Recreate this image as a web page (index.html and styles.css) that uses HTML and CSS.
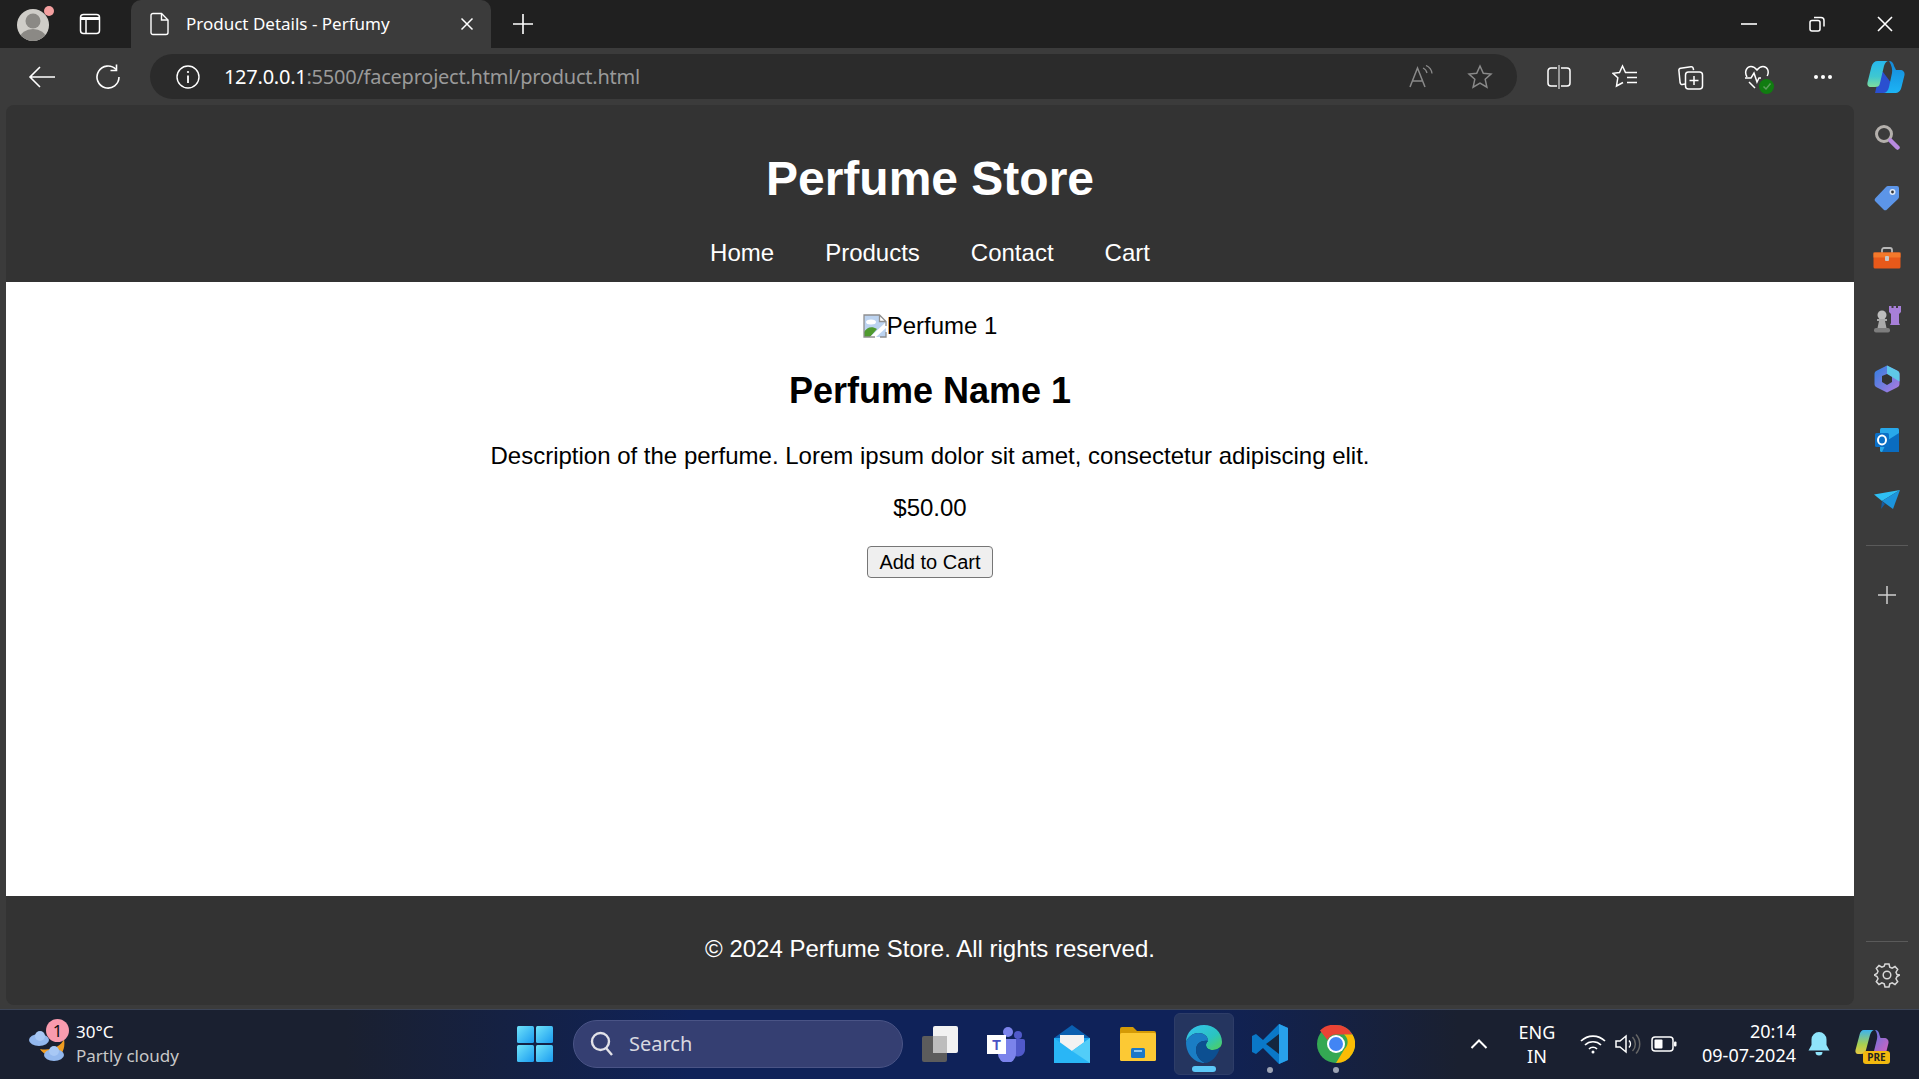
FILE: index.html
```html
<!DOCTYPE html>
<html lang="en">
<head>
  <meta charset="UTF-8">
  <title>Product Details - Perfumy</title>
  <link rel="stylesheet" href="styles.css">
</head>
<body>
  <div class="tabstrip">
    <div class="avatar">
      <svg width="36" height="36" viewBox="0 0 36 36"><defs><clipPath id="ac"><circle cx="16" cy="19" r="16"/></clipPath></defs><circle cx="16" cy="19" r="16" fill="#cfcdc8"/><g clip-path="url(#ac)"><circle cx="16" cy="15" r="7.5" fill="#8b8985"/><ellipse cx="16" cy="32" rx="13" ry="9" fill="#8b8985"/></g></svg>
      <span class="avatar-dot"></span>
    </div>
    <div class="strip-btn">
      <svg width="22" height="24" viewBox="0 0 22 24" fill="none" stroke="#fff" stroke-width="1.5"><rect x="1.500" y="2.500" width="19" height="19" rx="3"/><path d="M2 6.500h18" stroke-width="3"/><path d="M7 7v14"/></svg>
    </div>
    <div class="tab">
      <svg class="tab-icon" width="20" height="24" viewBox="0 0 20 24" fill="none" stroke="#fff" stroke-width="1.4"><path d="M3 1.500h8.500l6.500 6.500v12.500a2 2 0 0 1-2 2H3a2 2 0 0 1-2-2v-17a2 2 0 0 1 2-2z"/><path d="M11.500 1.500V8H18"/></svg>
      <span class="tab-title">Product Details - Perfumy</span>
      <svg class="tab-close" width="14" height="14" viewBox="0 0 14 14" stroke="#fff" stroke-width="1.5"><path d="M1.500 1.500l11 11M12.500 1.500l-11 11"/></svg>
    </div>
    <div class="new-tab">
      <svg width="22" height="22" viewBox="0 0 22 22" stroke="#fff" stroke-width="1.6"><path d="M11 1v20M1 11h20"/></svg>
    </div>
    <div class="window-btns">
      <div class="window-btn"><svg width="16" height="16" viewBox="0 0 16 16" stroke="#fff" stroke-width="1.6"><path d="M0 8h16"/></svg></div>
      <div class="window-btn"><svg width="16" height="16" viewBox="0 0 16 16" fill="none" stroke="#fff" stroke-width="1.5"><rect x="1" y="4.500" width="10" height="10.500" rx="2"/><path d="M5 1.500h7a3 3 0 0 1 3 3v6"/></svg></div>
      <div class="window-btn"><svg width="16" height="16" viewBox="0 0 16 16" stroke="#fff" stroke-width="1.6"><path d="M1 1l14 14M15 1L1 15"/></svg></div>
    </div>
  </div>

  <div class="toolbar">
    <div class="nav-btn">
      <svg width="28" height="24" viewBox="0 0 28 24" fill="none" stroke="#fff" stroke-width="1.600"><path d="M27 12H2M12 2L2 12l10 10"/></svg>
    </div>
    <div class="nav-btn">
      <svg width="26" height="26" viewBox="0 0 26 26" fill="none" stroke="#fff" stroke-width="1.600"><path d="M21 5.500A11 11 0 1 0 24 13"/><path d="M21.500 0.500v6h-6"/></svg>
    </div>
    <div class="address-bar">
      <svg class="info-icon" width="24" height="24" viewBox="0 0 24 24" fill="none" stroke="#fff" stroke-width="1.400"><circle cx="12" cy="12" r="11"/><path d="M12 10.500V18" stroke-width="1.800"/><circle cx="12" cy="7" r="1.100" fill="#fff" stroke="none"/></svg>
      <span class="url"><span class="url-host">127.0.0.1</span>:5500/faceproject.html/product.html</span>
      <svg class="read-icon" width="26" height="24" viewBox="0 0 26 24" fill="none" stroke="#8a8a8a" stroke-width="1.500"><path d="M2 22L9.500 3 17 22M5 16h9"/><path d="M15 3a7 7 0 0 1 4 5M18 0.500a10 10 0 0 1 6 8" stroke-width="1.300"/></svg>
      <svg class="star-icon" width="26" height="26" viewBox="0 0 26 26" fill="none" stroke="#8a8a8a" stroke-width="1.500"><path d="M13 2l3.300 7.300 7.700.8-5.800 5.200 1.700 7.900L13 19.200l-6.900 4 1.700-7.900L2 10.100l7.700-.8z"/></svg>
    </div>
    <div class="tool-icons">
      <div class="tool-icon"><svg width="24" height="26" viewBox="0 0 24 26" fill="none" stroke="#fff" stroke-width="1.500"><path d="M10 4H4a3 3 0 0 0-3 3v12a3 3 0 0 0 3 3h6M14 4h6a3 3 0 0 1 3 3v12a3 3 0 0 1-3 3h-6"/><path d="M12 1v24" stroke="#bbb"/></svg></div>
      <div class="tool-icon"><svg width="26" height="26" viewBox="0 0 26 26" fill="none" stroke="#fff" stroke-width="1.500"><path d="M16 8.500h-2.500L10.500 2 7.500 8.500 1 9.300l4.800 4.500-1.300 8.200 6.500-3.500"/><path d="M16 8.500h9M15 13.500h10M15 18.500h10"/></svg></div>
      <div class="tool-icon"><svg width="26" height="26" viewBox="0 0 26 26" fill="none" stroke="#fff" stroke-width="1.500"><path d="M7 20l-2.600.4a2 2 0 0 1-2.300-1.700L0.900 6.500a2 2 0 0 1 1.700-2.300L13 2.700a2 2 0 0 1 2.200 1.500l.4 2"/><rect x="7.500" y="8" width="17" height="17" rx="3"/><path d="M16 12v9M11.500 16.500h9"/></svg></div>
      <div class="tool-icon health">
        <svg width="26" height="26" viewBox="0 0 26 26" fill="none" stroke="#fff" stroke-width="1.500"><path d="M3 13C0 8 2.500 2.500 7 2.500c2.800 0 4.500 1.500 6 3.500 1.500-2 3.200-3.500 6-3.500 4.500 0 6.500 5 4.200 9.500"/><path d="M1 14h6l3-5 3 9 2-4h2M5 18l6 6"/></svg>
        <span class="health-dot"><svg width="10" height="10" viewBox="0 0 10 10" fill="none" stroke="#5c9d5c" stroke-width="1.500"><path d="M1.500 5.500l2.500 2.500 4.500-5.500"/></svg></span>
      </div>
      <div class="tool-icon"><svg width="20" height="6" viewBox="0 0 20 6" fill="#fff"><circle cx="3" cy="3" r="2"/><circle cx="10" cy="3" r="2"/><circle cx="17" cy="3" r="2"/></svg></div>
      <div class="tool-icon copilot">
        <svg width="38" height="34" viewBox="0 0 38 34"><defs><linearGradient id="cp1" x1="0" y1="0" x2="0" y2="1"><stop offset="0" stop-color="#26b8ee"/><stop offset=".6" stop-color="#3fc7d0"/><stop offset="1" stop-color="#7fdc9c"/></linearGradient><linearGradient id="cp2" x1="0" y1="0" x2="0" y2="1"><stop offset="0" stop-color="#1588d8"/><stop offset="1" stop-color="#1cb4f5"/></linearGradient></defs><path d="M16 12h-3l-5 21h14c3 0 5-2 6-5z" fill="#2a4fd0"/><path d="M11 1h11c-3 0-4 2-5 5l-4 17c-.5 3-2 4-5 4H4c-3 0-4-2-3.500-4.500l4-16C5.500 3 7.500 1 11 1z" fill="url(#cp1)"/><path d="M22 1c3 0 4.500 2 5 5l2 4h4c3 0 5 2 4.500 5l-3 12c-1 4-3 6-7 6H16c3 0 5-2 6-6l3-14c.6-3 0-7-3-12z" fill="url(#cp2)"/></svg>
      </div>
    </div>
  </div>

  <div class="browser-body">
    <div class="page">
      <header class="site-header">
        <h1>Perfume Store</h1>
        <nav class="site-nav">
          <a href="#">Home</a>
          <a href="#">Products</a>
          <a href="#">Contact</a>
          <a href="#">Cart</a>
        </nav>
      </header>
      <main class="product">
        <div class="product-image">
          <svg width="24" height="24" viewBox="0 0 24 24"><path d="M1 1h15.500L23 7.500V23H1z" fill="#bcd3f0"/><ellipse cx="8" cy="8" rx="5" ry="2.500" fill="#fff"/><path d="M1 23v-5c3-5 8-6 13-3l-7 8z" fill="#4f9a2f"/><path d="M7 23L23 8v6L13 23z" fill="#fff"/><path d="M16.500 1v6.500H23z" fill="#fff"/><path d="M12 23H1V1h15.500L23 7.500V12M16.500 1v6.500H23M17 23h6v-5" fill="none" stroke="#8f8f8f" stroke-width="1.300"/></svg><span>Perfume 1</span>
        </div>
        <h2>Perfume Name 1</h2>
        <p class="description">Description of the perfume. Lorem ipsum dolor sit amet, consectetur adipiscing elit.</p>
        <p class="price">$50.00</p>
        <button type="button" class="add-btn">Add to Cart</button>
      </main>
      <footer class="site-footer">© 2024 Perfume Store. All rights reserved.</footer>
    </div>

    <aside class="sidebar">
      <div class="side-icon"><svg width="26" height="26" viewBox="0 0 26 26" fill="none"><circle cx="10" cy="10" r="7.500" stroke="#b4b0ac" stroke-width="3"/><path d="M16.500 16.500l7 7" stroke="#b88ae0" stroke-width="4.500" stroke-linecap="round"/></svg></div>
      <div class="side-icon"><svg width="26" height="26" viewBox="0 0 26 26"><path d="M14 1h9a2 2 0 0 1 2 2v9a3 3 0 0 1-1 2L13 24.500a2.500 2.500 0 0 1-3.500 0L1.500 16.500a2.500 2.500 0 0 1 0-3.500L12 2a3 3 0 0 1 2-1z" fill="#5c95e8"/><circle cx="18.500" cy="7" r="3" fill="#dfe8f5"/><circle cx="18.500" cy="7" r="1.400" fill="#333"/></svg></div>
      <div class="side-icon"><svg width="28" height="22" viewBox="0 0 28 22"><path d="M9 6V3a2 2 0 0 1 2-2h6a2 2 0 0 1 2 2v3" fill="none" stroke="#b8b8b8" stroke-width="1.800"/><rect x="0.500" y="5.500" width="27" height="16" rx="1.500" fill="#e8591a"/><rect x="0.500" y="5.500" width="27" height="5" fill="#f4792b"/><rect x="12" y="9" width="4" height="5" rx="1" fill="#c8c8c8"/></svg></div>
      <div class="side-icon"><svg width="28" height="28" viewBox="0 0 28 28"><path d="M16 1h2.500v2h2V1h2.500v2h2V1H28v6l-2 2v9l1 2H17l1-2V9l-2-2z" fill="#a77fd8"/><circle cx="9" cy="10" r="4.500" fill="#bdbdbd"/><path d="M4 14h10v2H12l1.500 7h-9L6 16H4z" fill="#a9a9a9"/><rect x="1" y="23" width="16" height="4.500" rx="2" fill="#7d7d7d"/></svg></div>
      <div class="side-icon"><svg width="26" height="28" viewBox="0 0 26 28"><defs><linearGradient id="m1" x1="0" y1="0" x2="1" y2="1"><stop offset="0" stop-color="#2f7fe0"/><stop offset="1" stop-color="#b07ae0"/></linearGradient></defs><path d="M13 0.500l10 5a4 4 0 0 1 2.500 4v9a4 4 0 0 1-2.500 4l-10 5-10-5a4 4 0 0 1-2.500-4v-9a4 4 0 0 1 2.500-4z" fill="url(#m1)"/><path d="M13 .5l10 5a4 4 0 0 1 2.500 4v7L13 9z" fill="#5fc8e8"/><path d="M8 11l5-2 5 3v5l-5 3-5-3z" fill="#333"/></svg></div>
      <div class="side-icon"><svg width="26" height="26" viewBox="0 0 26 26"><rect x="6" y="1" width="19" height="24" rx="1.500" fill="#28a8ea"/><path d="M14 13l11-7v19H8z" fill="#0a6cc0"/><rect x="1" y="6" width="14" height="14" rx="1.500" fill="#0b6fc6"/><ellipse cx="8" cy="13" rx="4" ry="4.500" fill="none" stroke="#fff" stroke-width="2"/></svg></div>
      <div class="side-icon"><svg width="26" height="20" viewBox="0 0 26 20"><path d="M0 4.500L26 0 8 11z" fill="#2ec0f5"/><path d="M26 0L8 11l11 8z" fill="#1c94dc"/><path d="M8 11l-1 8 4-5z" fill="#155a9e"/></svg></div>
      <div class="side-divider"></div>
      <div class="side-icon"><svg width="20" height="20" viewBox="0 0 20 20" stroke="#d0d0d0" stroke-width="1.500"><path d="M10 1v18M1 10h18"/></svg></div>
      <div class="side-spacer"></div>
      <div class="side-divider side-divider-low"></div>
      <div class="side-icon gear"><svg width="26" height="26" viewBox="0 0 26 26" fill="none" stroke="#d8d8d8" stroke-width="1.500"><circle cx="13" cy="13" r="3.800"/><path d="M11 2h4l.8 3.200 2.300 1 2.900-1.700 2.700 2.900-1.700 2.800 1 2.300L26 13v0l-3 1.500-1 2.300 1.700 2.800-2.700 2.900-2.900-1.700-2.300 1-.8 3.200h-4l-.8-3.200-2.300-1L5 22.500 2.300 19.600 4 16.800l-1-2.300L0 13l3-1.500 1-2.300-1.700-2.800L5 3.500l2.900 1.700 2.300-1z"/></svg></div>
    </aside>
  </div>

  <div class="taskbar">
    <div class="weather">
      <div class="weather-icon">
        <svg width="40" height="38" viewBox="0 0 40 38"><path d="M12 24a14 12 0 0 0 22 4c2-4 3-8 2-14-3 8-14 12-24 10z" fill="#f09c20"/><ellipse cx="11" cy="15" rx="10" ry="6" fill="#93b8ee"/><ellipse cx="12" cy="11" rx="5" ry="5" fill="#a8c8f5"/><ellipse cx="26" cy="30" rx="10" ry="6" fill="#93b8ee"/><ellipse cx="26" cy="26" rx="5" ry="5" fill="#a8c8f5"/></svg>
        <span class="weather-badge">1</span>
      </div>
      <div class="weather-text">
        <span class="temp">30°C</span>
        <span class="cond">Partly cloudy</span>
      </div>
    </div>

    <div class="task-center">
      <svg class="win-logo" width="36" height="36" viewBox="0 0 36 36"><defs><linearGradient id="wl" x1="0" y1="0" x2="1" y2="1"><stop offset="0" stop-color="#6fe3fa"/><stop offset="1" stop-color="#1a9bf0"/></linearGradient></defs><rect x="0" y="0" width="17" height="17" rx="1.500" fill="url(#wl)"/><rect x="19" y="0" width="17" height="17" rx="1.500" fill="url(#wl)"/><rect x="0" y="19" width="17" height="17" rx="1.500" fill="url(#wl)"/><rect x="19" y="19" width="17" height="17" rx="1.500" fill="url(#wl)"/></svg>
      <div class="search-box">
        <svg width="24" height="26" viewBox="0 0 24 26" fill="none" stroke="#e2e2e8" stroke-width="2.400"><circle cx="10.500" cy="10.500" r="8.500"/><path d="M16 17l6 7"/></svg>
        <span>Search</span>
      </div>
      <div class="task-apps">
        <div class="app"><svg width="36" height="36" viewBox="0 0 36 36"><rect x="11" y="0" width="25" height="27" rx="2" fill="#f2f2f2"/><rect x="0" y="10" width="25" height="26" rx="2" fill="#5c5c5c"/><rect x="11" y="10" width="14" height="17" fill="#bdbdbd"/></svg></div>
        <div class="app"><svg width="38" height="36" viewBox="0 0 38 36"><circle cx="21" cy="6" r="5" fill="#7b83eb"/><circle cx="31" cy="9" r="4" fill="#5059c9"/><path d="M25 13h11a2 2 0 0 1 2 2v9a7 7 0 0 1-13 3z" fill="#5059c9"/><path d="M11 13h18v15a9 9 0 0 1-18 0z" fill="#7b83eb"/><rect x="0" y="9" width="19" height="19" fill="#fff"/><text x="9.500" y="24" class="teams-t">T</text></svg></div>
        <div class="app"><svg width="36" height="38" viewBox="0 0 36 38"><path d="M18 0L36 13v2H0v-2z" fill="#0a5fb0"/><rect x="0" y="13" width="36" height="25" fill="#1ea6ef"/><path d="M6 10h24v9L18 27 6 19z" fill="#f2f2f2"/><path d="M0 13l18 13 18-13v25H0z" fill="#29b6f6"/><path d="M18 26L36 13v25z" fill="#52cdf8"/></svg></div>
        <div class="app"><svg width="36" height="34" viewBox="0 0 36 34"><path d="M0 2a2 2 0 0 1 2-2h11l4 4h17a2 2 0 0 1 2 2v6H0z" fill="#d49a06"/><rect x="0" y="6" width="36" height="28" rx="1.500" fill="#fcc934"/><rect x="11" y="21" width="14" height="10" rx="1.500" fill="#1a78c8"/><rect x="14" y="23" width="8" height="2" fill="#8ec8f0"/></svg></div>
        <div class="app app-active">
          <svg width="36" height="38" viewBox="0 0 36 38"><defs><linearGradient id="eg" x1="0" y1="0" x2="1" y2="1"><stop offset="0" stop-color="#35c1f1"/><stop offset=".6" stop-color="#2ac4c0"/><stop offset="1" stop-color="#54d053"/></linearGradient></defs><path d="M18 0c10 0 18 7 18 17 0 5-4 8-9 8-4 0-7-2-7-5 0-2 1-3 2-4 0-5-4-8-10-8C7 8 2 12 0 17 0 7 8 0 18 0z" fill="url(#eg)"/><path d="M0 17c2-5 7-9 12-9 6 0 10 3 10 8-6-1-12 2-12 9 0 5 3 10 9 13C8 38 0 29 0 17z" fill="#1a7dc4"/><path d="M10 25c0-7 6-10 12-9-1 1-2 2-2 4 0 3 3 5 7 5 3 0 5-1 7-3-2 9-9 16-15 16-6-3-9-8-9-13z" fill="#0c4f91"/></svg>
          <span class="app-run app-run-wide"></span>
        </div>
        <div class="app">
          <svg width="36" height="40" viewBox="0 0 36 40"><path d="M27 0l9 4v32l-9 4L11 24l-7 6-4-2V12l4-2 7 6z" fill="#0a78c8"/><path d="M27 10v20L14 20z" fill="#14273f"/><path d="M27 0l9 4v32l-9 4z" fill="#28a0ea"/></svg>
          <span class="app-run"></span>
        </div>
        <div class="app">
          <svg width="38" height="38" viewBox="0 0 38 38"><circle cx="19" cy="19" r="19" fill="#34a853"/><path d="M19 0a19 19 0 0 1 16.500 9.500H19a9.500 9.500 0 0 0-8.500 5.500L3 5.500A19 19 0 0 1 19 0z" fill="#ea4335"/><path d="M35.500 9.500A19 19 0 0 1 19 38l8.500-14a9.500 9.500 0 0 0-.5-14.500z" fill="#fbbc04"/><circle cx="19" cy="19" r="9" fill="#fff"/><circle cx="19" cy="19" r="7" fill="#4285f4"/></svg>
          <span class="app-run"></span>
        </div>
      </div>
    </div>

    <div class="tray">
      <svg class="tray-chevron" width="18" height="10" viewBox="0 0 18 10" fill="none" stroke="#fff" stroke-width="2"><path d="M1.500 9L9 1.500 16.500 9"/></svg>
      <div class="lang"><span>ENG</span><span>IN</span></div>
      <svg class="tray-wifi" width="26" height="20" viewBox="0 0 26 20" fill="none" stroke="#fff" stroke-width="1.700"><path d="M1 7a17 17 0 0 1 24 0M5 11a11.500 11.500 0 0 1 16 0M9 15a5.500 5.500 0 0 1 8 0"/><circle cx="13" cy="18" r="1.500" fill="#fff" stroke="none"/></svg>
      <svg class="tray-sound" width="26" height="22" viewBox="0 0 26 22" fill="none" stroke="#fff" stroke-width="1.500"><path d="M1 8v6h4l6 5V3L5 8z"/><path d="M14 7.500a5 5 0 0 1 0 7"/><path d="M17.500 4a10 10 0 0 1 0 14M21 1.500a14 14 0 0 1 0 19" stroke="#666"/></svg>
      <svg class="tray-battery" width="26" height="16" viewBox="0 0 26 16"><rect x="1" y="1" width="21" height="14" rx="3" fill="none" stroke="#fff" stroke-width="1.500"/><rect x="3.500" y="3.500" width="8" height="9" rx="1" fill="#fff"/><rect x="23" y="5.500" width="2.500" height="5" rx="1" fill="#fff"/></svg>
      <div class="clock"><span>20:14</span><span>09-07-2024</span></div>
      <svg class="tray-bell" width="22" height="24" viewBox="0 0 22 24" fill="#8fe4fb"><path d="M11 0a7.500 7.500 0 0 1 7.500 7.500V13l3 5.500H.500l3-5.500V7.500A7.500 7.500 0 0 1 11 0z"/><path d="M7.500 20h7a3.500 3.500 0 0 1-7 0z"/></svg>
      <div class="copilot-pre">
        <svg width="34" height="28" viewBox="0 0 34 28"><defs><linearGradient id="cg" x1="0" y1="0" x2="0" y2="1"><stop offset="0" stop-color="#3db4f0"/><stop offset=".6" stop-color="#a8d050"/><stop offset="1" stop-color="#e8c840"/></linearGradient><linearGradient id="cg2" x1="0" y1="0" x2="1" y2="1"><stop offset="0" stop-color="#4a78e8"/><stop offset="1" stop-color="#e060b8"/></linearGradient></defs><path d="M9 0h11c-3 0-4 2-5 5l-4 15c-.5 3-2 4-5 4H3c-2 0-3-2-2.500-4l4-15C5 2 6.500 0 9 0z" fill="url(#cg)"/><path d="M20 0c3 0 4 2 4.500 5l1 3H29c3 0 5 2 4.500 5l-2 8c-1 4-3 6-7 6H13c3 0 5-2 6-6l3-12c.7-3 0-7-2-9z" fill="url(#cg2)"/></svg>
        <span class="pre-label">PRE</span>
      </div>
    </div>
  </div>
</body>
</html>
```

FILE: styles.css
```css
* {
  box-sizing: border-box;
}

html, body {
  margin: 0;
  height: 100%;
  overflow: hidden;
}

body {
  display: flex;
  flex-direction: column;
  background: #3b3b3b;
  font-family: "Noto Sans", sans-serif;
  color: #fff;
}

svg {
  display: block;
  flex-shrink: 0;
}

/* tab strip */
.tabstrip {
  display: flex;
  align-items: center;
  height: 48px;
  background: #202020;
}

.avatar {
  position: relative;
  width: 36px;
  margin-left: 17px;
}

.avatar-dot {
  position: absolute;
  top: 0;
  right: -1px;
  width: 10px;
  height: 10px;
  border-radius: 50%;
  background: #f4a0a0;
}

.strip-btn {
  margin-left: 26px;
}

.tab {
  display: flex;
  align-items: center;
  align-self: flex-end;
  width: 360px;
  height: 48px;
  margin-left: 30px;
  padding: 0 17px 0 19px;
  background: #3b3b3b;
  border-radius: 10px 10px 0 0;
}

.tab-title {
  margin: -2px 0 0 16px;
  font-size: 17px;
}

.tab-close {
  margin-left: auto;
}

.new-tab {
  margin-left: 21px;
}

.window-btns {
  display: flex;
  margin-left: auto;
}

.window-btn {
  display: flex;
  align-items: center;
  justify-content: center;
  width: 68px;
  height: 48px;
}

/* toolbar */
.toolbar {
  display: flex;
  align-items: center;
  height: 57px;
  padding-left: 9px;
}

.nav-btn {
  display: flex;
  align-items: center;
  justify-content: center;
  width: 66px;
}

.address-bar {
  display: flex;
  align-items: center;
  width: 1368px;
  height: 45px;
  margin-left: 9px;
  padding: 0 26px;
  background: #2b2b2b;
  border-radius: 23px;
}

.url {
  margin-left: 24px;
  font-size: 20px;
  letter-spacing: -0.24px;
  color: #9a9a9a;
}

.url-host {
  color: #fff;
}

.read-icon {
  margin-left: auto;
}

.star-icon {
  margin-left: 33px;
  margin-right: -2px;
}

.tool-icons {
  display: flex;
  margin-left: 9px;
}

.tool-icon {
  position: relative;
  display: flex;
  align-items: center;
  justify-content: center;
  width: 66px;
  height: 40px;
}

.copilot {
  margin-left: -3px;
}

.health-dot {
  position: absolute;
  right: 16px;
  bottom: 3px;
  display: flex;
  align-items: center;
  justify-content: center;
  width: 15px;
  height: 15px;
  border-radius: 50%;
  background: #107c10;
}

/* page */
.browser-body {
  display: flex;
  height: 904px;
}

.page {
  display: flex;
  flex-direction: column;
  width: 1848px;
  height: 900px;
  margin-left: 6px;
  overflow: hidden;
  background: #333;
  border-radius: 8px;
  font-family: "Liberation Sans", Arial, sans-serif;
}

.site-header {
  height: 177px;
  padding-top: 46px;
  text-align: center;
}

.site-header h1 {
  margin: 0 0 33px;
  font-size: 48px;
  line-height: 55px;
}

.site-nav {
  display: flex;
  justify-content: center;
  gap: 51px;
}

.site-nav a {
  color: #fff;
  font-size: 24px;
  line-height: 27px;
  text-decoration: none;
}

.product {
  flex: 1;
  display: flex;
  flex-direction: column;
  align-items: center;
  padding-top: 30px;
  background: #fff;
  color: #000;
  font-size: 24px;
  line-height: 27px;
}

.product-image {
  display: flex;
  align-items: center;
}

.product h2 {
  margin: 31px 0 0;
  font-size: 36px;
  line-height: 41px;
}

.description {
  margin: 31px 0 0;
}

.price {
  margin: 25px 0 0;
}

.add-btn {
  width: 126px;
  height: 32px;
  margin-top: 25px;
  padding: 0;
  background: #efefef;
  border: 1.5px solid #767676;
  border-radius: 4px;
  color: #000;
  font-family: "Liberation Sans", Arial, sans-serif;
  font-size: 20px;
}

.site-footer {
  display: flex;
  align-items: center;
  justify-content: center;
  height: 109px;
  padding-bottom: 3px;
  font-size: 24px;
}

/* sidebar */
.sidebar {
  display: flex;
  flex-direction: column;
  align-items: center;
  width: 65px;
  padding: 2px 0 4px;
}

.side-icon {
  display: flex;
  align-items: center;
  justify-content: center;
  height: 60.500px;
  flex-shrink: 0;
}

.side-divider {
  width: 42px;
  height: 1px;
  margin: 14px 0 19px;
  background: #5a5a5a;
}

.side-divider-low {
  margin: 0 0 3px;
}

.side-spacer {
  flex: 1;
}

/* taskbar */
.taskbar {
  position: relative;
  display: flex;
  align-items: center;
  height: 70px;
  padding-bottom: 2px;
  background: linear-gradient(90deg, #1a2030 0, #1a2030 18%, #0f2259 36%, #0f2259 62%, #1a2030 76%, #1a2030 100%);
  border-top: 1px solid #3d4557;
}

.weather {
  display: flex;
  align-items: center;
  width: 500px;
  padding-left: 28px;
}

.weather-icon {
  position: relative;
  width: 40px;
}

.weather-badge {
  position: absolute;
  top: -6px;
  left: 18px;
  width: 23px;
  height: 23px;
  border-radius: 50%;
  background: #f99bae;
  color: #111;
  font-size: 17px;
  line-height: 23px;
  text-align: center;
}

.weather-text {
  display: flex;
  flex-direction: column;
  margin-left: 8px;
  font-size: 17px;
  line-height: 24px;
}

.cond {
  color: #c8c8c8;
}

.task-center {
  display: flex;
  align-items: center;
  margin-left: 17px;
}

.search-box {
  display: flex;
  align-items: center;
  width: 330px;
  height: 48px;
  margin-left: 20px;
  padding-left: 16px;
  background: #353f72;
  border: 1.5px solid #4a5486;
  border-radius: 24px;
  color: #d8d8e0;
  font-size: 20px;
}

.search-box span {
  margin-left: 15px;
}

.task-apps {
  display: flex;
  margin-left: 4px;
}

.app {
  position: relative;
  display: flex;
  align-items: center;
  justify-content: center;
  width: 66px;
  height: 62px;
  border-radius: 6px;
}

.app-active {
  width: 60px;
  margin: 0 3px;
  background: #25355f;
  border: 1px solid #2e3d68;
}

.app-run {
  position: absolute;
  bottom: 2px;
  left: 30px;
  width: 6px;
  height: 6px;
  border-radius: 3px;
  background: #9ca3b4;
}

.app-run-wide {
  left: 17px;
  width: 24px;
  background: #5cc8f8;
}

.teams-t {
  fill: #4a52c4;
  font-family: "Liberation Sans", Arial, sans-serif;
  font-size: 14px;
  font-weight: 700;
  text-anchor: middle;
}

.tray {
  display: flex;
  align-items: center;
  margin-left: auto;
  padding-right: 30px;
}

.lang {
  display: flex;
  flex-direction: column;
  align-items: center;
  width: 50px;
  margin-left: 24px;
  font-size: 18px;
  line-height: 24px;
}

.tray-wifi {
  margin-left: 18px;
}

.tray-sound {
  margin-left: 9px;
}

.tray-battery {
  margin-left: 10px;
}

.clock {
  display: flex;
  flex-direction: column;
  align-items: flex-end;
  width: 110px;
  margin: -2px 0 0 9px;
  font-size: 18px;
  line-height: 24px;
}

.tray-bell {
  margin-left: 12px;
}

.copilot-pre {
  position: relative;
  margin-left: 25px;
}

.pre-label {
  position: absolute;
  left: 8px;
  bottom: -6px;
  width: 27px;
  height: 13px;
  background: #f2b90f;
  border-radius: 3px;
  color: #222;
  font-size: 10px;
  font-weight: 700;
  line-height: 13px;
  text-align: center;
}
```
